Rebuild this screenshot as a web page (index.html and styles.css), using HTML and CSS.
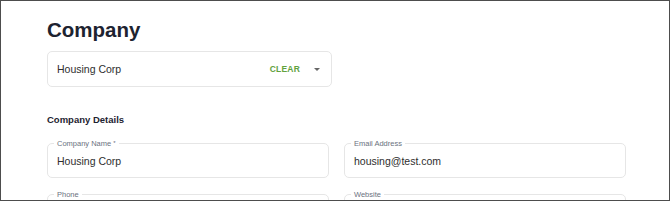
FILE: index.html
```html
<!DOCTYPE html>
<html lang="en">
  <head>
    <meta charset="UTF-8" />
    <meta name="viewport" content="width=device-width, initial-scale=1.0" />
    <title>Company</title>
    <link rel="stylesheet" href="styles.css">
  </head>

  <body>
    <div class="frame">
      <h1 class="title">Company</h1>

      <!-- company picker -->
      <div class="picker">
        <div class="picker-value">Housing Corp</div>
        <div class="picker-clear">CLEAR</div>
        <div class="picker-arrow"></div>
      </div>

      <h2 class="section-title">Company Details</h2>

      <div class="fields">
        <div class="field">
          <label class="field-label">Company Name <span class="req">*</span></label>
          <div class="field-value">Housing Corp</div>
        </div>
        <div class="field">
          <label class="field-label">Email Address</label>
          <div class="field-value">housing@test.com</div>
        </div>
        <div class="field">
          <label class="field-label">Phone</label>
          <div class="field-value"></div>
        </div>
        <div class="field">
          <label class="field-label">Website</label>
          <div class="field-value"></div>
        </div>
      </div>
    </div>
  </body>
</html>
```

FILE: styles.css
```css
html,
body {
  margin: 0;
  padding: 0;
  background: #fff;
}

body {
  font-family: "Liberation Sans", Arial, sans-serif;
  color: #2b2b2b;
}

.frame {
  box-sizing: border-box;
  width: 670px;
  height: 201px;
  border: 1px solid #4d4d4d;
  padding: 17px 46px 0 46px;
  overflow: hidden;
}

.title {
  margin: 0;
  font-size: 20.5px;
  line-height: 24px;
  font-weight: bold;
  color: #1d2330;
}

.picker {
  box-sizing: border-box;
  display: flex;
  align-items: center;
  width: 285px;
  height: 36px;
  margin-top: 9px;
  padding: 0 11px 0 9px;
  border: 1px solid #e6e6e6;
  border-radius: 5px;
}

.picker-value {
  flex: 1;
  font-size: 10.5px;
  color: #2e2e2e;
}

.picker-clear {
  font-size: 8.5px;
  font-weight: bold;
  letter-spacing: 0.2px;
  color: #62a23e;
  margin-right: 14px;
}

.picker-arrow {
  width: 0;
  height: 0;
  border-left: 3px solid transparent;
  border-right: 3px solid transparent;
  border-top: 3px solid #666;
}

.section-title {
  margin: 27px 0 0 0;
  font-size: 9.5px;
  line-height: 12px;
  font-weight: bold;
  color: #1d2330;
}

.fields {
  display: grid;
  grid-template-columns: 282px 282px;
  column-gap: 15px;
  row-gap: 16px;
  margin-top: 17px;
}

.field {
  position: relative;
  box-sizing: border-box;
  height: 35px;
  border: 1px solid #e6e6e6;
  border-radius: 5px;
  display: flex;
  align-items: center;
  padding: 0 9px;
}

.field-label {
  position: absolute;
  top: -5px;
  left: 6px;
  padding: 0 3px;
  background: #fff;
  font-size: 7.5px;
  line-height: 9px;
  color: #6b7280;
}

.req {
  font-size: 6px;
  vertical-align: top;
}

.field-value {
  font-size: 10.5px;
  color: #2e2e2e;
  padding-top: 1px;
}
```
